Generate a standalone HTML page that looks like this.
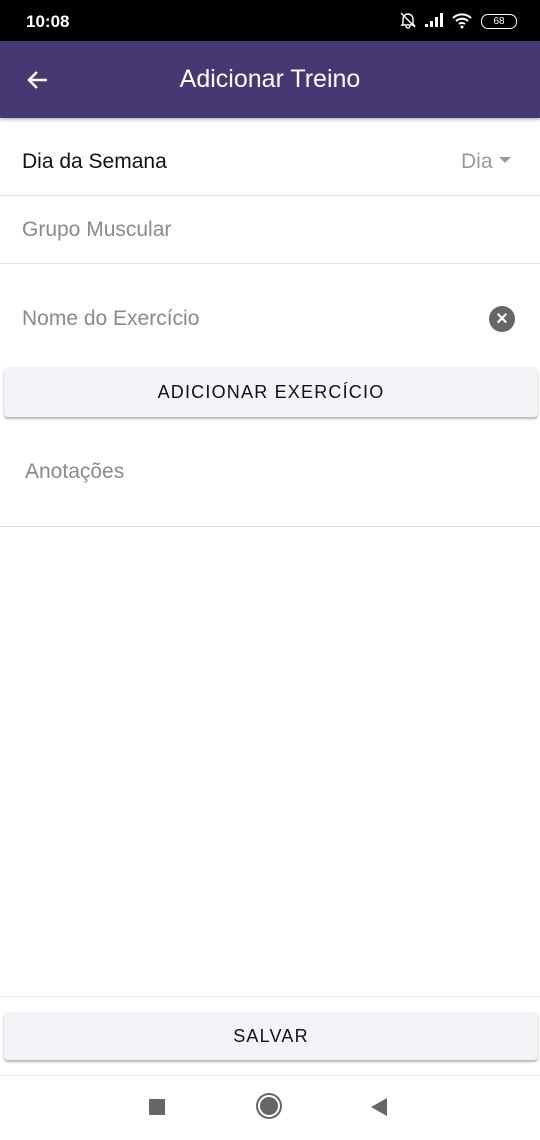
<!DOCTYPE html>
<html><head><style>
body{margin:0;width:540px;height:1140px;background:#fff;font-family:"Liberation Sans",sans-serif;position:relative;overflow:hidden}
.a{position:absolute}
.line{position:absolute;left:0;width:540px;height:1px;background:#ddd}
.btn{position:absolute;left:4px;width:534px;background:#f3f4f7;border-radius:4px;box-shadow:0 2px 2px rgba(0,0,0,.3);text-align:center;font-size:18px;letter-spacing:1.2px;color:#111}
.ph{position:absolute;left:22px;font-size:21px;color:#8a8a8a}
</style></head><body>
<div class="a" style="left:0;top:0;width:540px;height:41px;background:#000"></div>
<div class="a" style="left:26px;top:12px;color:#fff;font-size:17px;font-weight:bold">10:08</div>
<svg class="a" style="left:399px;top:11px" width="18" height="18" viewBox="0 0 18 18"><path d="M4 13V8a5 5 0 0 1 10 0v5l1 1H3zM7 15a2 2 0 0 0 4 0M2 2l14 14" stroke="#fff" stroke-width="1.4" fill="none"/></svg>
<div class="a" style="left:425px;top:13px;width:20px;height:14px">
<div class="a" style="left:0;top:11px;width:3px;height:3px;background:#fff"></div><div class="a" style="left:5px;top:8px;width:3px;height:6px;background:#fff"></div><div class="a" style="left:10px;top:4px;width:3px;height:10px;background:#fff"></div><div class="a" style="left:15px;top:0;width:3px;height:14px;background:#fff"></div></div>
<svg class="a" style="left:452px;top:13px" width="20" height="16" viewBox="0 0 20 16"><path d="M1 5a13 13 0 0 1 18 0M4 8a9 9 0 0 1 12 0M7 11a5 5 0 0 1 6 0" stroke="#fff" stroke-width="2" fill="none"/><circle cx="10" cy="14" r="1.5" fill="#fff"/></svg>
<div class="a" style="left:481px;top:14px;width:34px;height:13px;border:1.5px solid #fff;border-radius:7px;color:#fff;font-size:10px;text-align:center;line-height:13px">68</div>
<div class="a" style="left:0;top:41px;width:540px;height:77px;background:#463873;box-shadow:0 2px 3px rgba(0,0,0,.25)"></div>
<svg class="a" style="left:26px;top:68px" width="24" height="24" viewBox="0 0 24 24"><path d="M21 12H4M11 4l-8 8 8 8" stroke="#fff" stroke-width="2.6" fill="none"/></svg>
<div class="a" style="left:0;width:540px;top:65px;text-align:center;color:#fff;font-size:25px">Adicionar Treino</div>
<div class="a" style="left:22px;top:150px;font-size:21px;color:#111">Dia da Semana</div>
<div class="a" style="left:461px;top:150px;font-size:21px;color:#999">Dia</div>
<div class="a" style="left:499px;top:157px;border-left:6px solid transparent;border-right:6px solid transparent;border-top:6px solid #999"></div>
<div class="line" style="top:195px"></div>
<div class="ph" style="top:218px">Grupo Muscular</div>
<div class="line" style="top:263px"></div>
<div class="ph" style="top:307px">Nome do Exercício</div>
<div class="a" style="left:489px;top:306px;width:26px;height:26px;border-radius:50%;background:#666;color:#fff;text-align:center;line-height:26px;font-size:20px;font-weight:bold">×</div>
<div class="btn" style="top:367px;height:50px;line-height:50px">ADICIONAR EXERCÍCIO</div>
<div class="ph" style="left:25px;top:460px">Anotações</div>
<div class="line" style="top:526px"></div>
<div class="line" style="top:996px;background:#eee"></div>
<div class="btn" style="top:1012px;height:48px;line-height:48px">SALVAR</div>
<div class="line" style="top:1075px;background:#f0f0f0"></div>
<div class="a" style="left:149px;top:1099px;width:16px;height:16px;background:#666"></div>
<div class="a" style="left:258px;top:1095px;width:18px;height:18px;border-radius:50%;background:#666;border:2px solid #fff;box-shadow:0 0 0 2px #666"></div>
<div class="a" style="left:371px;top:1098px;border-top:9px solid transparent;border-bottom:9px solid transparent;border-right:16px solid #666"></div>
</body></html>
